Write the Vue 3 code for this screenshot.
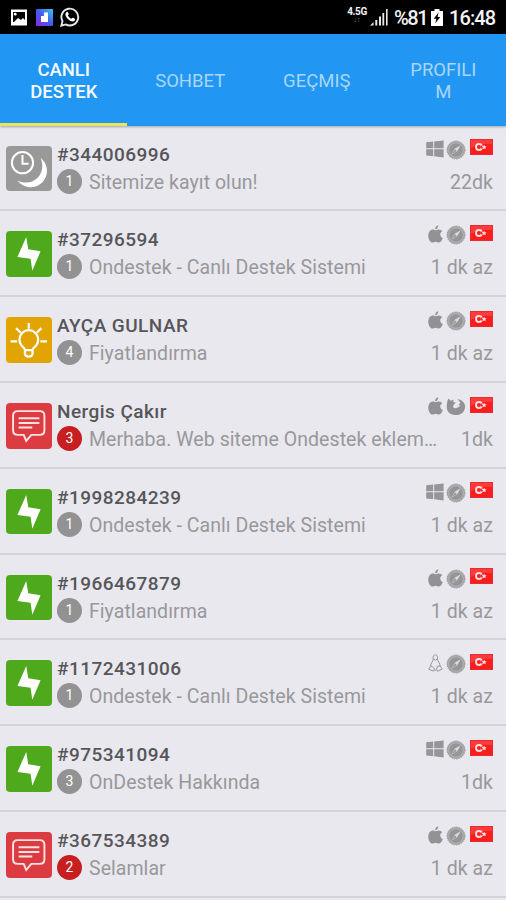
<script setup>
const tabs = [
  { lines: ['CANLI', 'DESTEK'], active: true },
  { lines: ['SOHBET'] },
  { lines: ['GEÇMIŞ'] },
  { lines: ['PROFILI', 'M'] },
]

const chats = [
  { kind: 'away', name: '#344006996', count: 1, message: 'Sitemize kayıt olun!', os: 'windows', browser: 'safari', time: '22dk' },
  { kind: 'online', name: '#37296594', count: 1, message: 'Ondestek - Canlı Destek Sistemi', os: 'apple', browser: 'safari', time: '1 dk az' },
  { kind: 'idea', name: 'AYÇA GULNAR', count: 4, message: 'Fiyatlandırma', os: 'apple', browser: 'safari', time: '1 dk az' },
  { kind: 'talk', name: 'Nergis Çakır', count: 3, message: 'Merhaba. Web siteme Ondestek eklem…', os: 'apple', browser: 'firefox', time: '1dk', unread: true },
  { kind: 'online', name: '#1998284239', count: 1, message: 'Ondestek - Canlı Destek Sistemi', os: 'windows', browser: 'safari', time: '1 dk az' },
  { kind: 'online', name: '#1966467879', count: 1, message: 'Fiyatlandırma', os: 'apple', browser: 'safari', time: '1 dk az' },
  { kind: 'online', name: '#1172431006', count: 1, message: 'Ondestek - Canlı Destek Sistemi', os: 'linux', browser: 'safari', time: '1 dk az' },
  { kind: 'online', name: '#975341094', count: 3, message: 'OnDestek Hakkında', os: 'windows', browser: 'safari', time: '1dk' },
  { kind: 'talk', name: '#367534389', count: 2, message: 'Selamlar', os: 'apple', browser: 'safari', time: '1 dk az', unread: true },
]
</script>

<template>
  <main class="screen">
    <header class="status">
      <div class="notices">
        <svg width="18" height="17" viewBox="0 0 18 17">
          <path d="M1 .5h16v16H1z" fill="#fff" />
          <path d="M3 3h12v8l-2-2-2 2-3-2-4 4H3z" fill="#000" />
          <circle cx="5.2" cy="5.2" r="1.4" fill="#fff" />
        </svg>
        <svg class="app-mark" width="17" height="17" viewBox="0 0 17 17">
          <defs>
            <linearGradient id="mark" x1="0" y1="1" x2="1" y2="0">
              <stop offset="0" stop-color="#8f25ea" />
              <stop offset=".5" stop-color="#425bea" />
              <stop offset="1" stop-color="#39c5f5" />
            </linearGradient>
          </defs>
          <rect width="17" height="17" rx="1" fill="url(#mark)" />
          <path d="M5 7h3V3.500h4V13H5z" fill="#fff" />
        </svg>
        <svg width="20" height="20" viewBox="0 0 20 20">
          <path d="M1.3 18.7l1.2-4.5a8.4 8.4 0 1 1 3.2 3.2z" fill="none" stroke="#e8e8e8" stroke-width="1.9" />
          <path d="M6.4 5.2c.8-.7 1.4-.5 1.7.2l.7 1.7c.1.5-.5 1-.9 1.4.8 1.6 2 2.6 3.6 3.3.6-.6 1-1.3 1.5-1l1.8.9c.7.4.2 1.7-.5 2.2-1.4 1-3.5.4-5.5-1.1-2.5-2-4.7-5.5-2.4-7.6z" fill="#fff" />
        </svg>
      </div>
      <div class="device">
        <div class="network"><b>4.5G</b><small>↓↑</small></div>
        <svg class="signal" width="18" height="18" viewBox="0 0 18 18" fill="#e8e8e8">
          <path d="M0 17.500L3.500 14v3.500zM5.300 12h2v5.500h-2zM9 8.500h2v9H9zM12.400 5h1.800v12.500h-1.800zM16 1h1.600v16.500H16z" />
        </svg>
        <span class="percent">%81</span>
        <svg class="battery" width="12" height="17" viewBox="0 0 12 17">
          <path d="M3.5 0h5v2H12v15H0V2h3.5z" fill="#fff" />
          <path d="M7.5 3.5L2.7 9.8h2.6l-1 4.5 5-6.3H6.6z" fill="#000" />
        </svg>
        <span class="clock">16:48</span>
      </div>
    </header>

    <nav class="tabs">
      <a v-for="tab in tabs" :key="tab.lines[0]" class="tab" :class="{ active: tab.active }">
        <span v-for="line in tab.lines" :key="line">{{ line }}</span>
      </a>
    </nav>

    <section class="list">
      <article v-for="chat in chats" :key="chat.name" class="row">
        <div class="avatar" :class="chat.kind">
          <svg v-if="chat.kind === 'away'" viewBox="0 0 45 45">
            <path d="M34.2 11.5c8 6.5 8.5 18 1.1 25-7.2 6.500-18.200 5.300-24-2.500 7 3.300 14.500 2.500 19.500-2.200 5.400-5.200 6.500-13 3.400-20.300z" fill="#fff" />
            <circle cx="16.300" cy="16.500" r="10.500" fill="#999" stroke="#fff" stroke-width="2" />
            <path d="M16.300 9v8.500h6" fill="none" stroke="#fff" stroke-width="2" />
          </svg>
          <svg v-else-if="chat.kind === 'online'" viewBox="0 0 45 45">
            <path d="M20 6L11.300 25.700l13 1.800L26 39.300l8.200-19.300-12.200-2z" fill="#fff" />
          </svg>
          <svg v-else-if="chat.kind === 'idea'" viewBox="0 0 45 45" fill="none" stroke="#fff" stroke-width="2.200">
            <path d="M18.500 32.500c0-2-1.600-3-3.100-4.200a9.300 9.300 0 1 1 14.300 0c-1.500 1.200-3.100 2.200-3.100 4.200M18 32.700h9M18.700 33v3.200q0 3 3.800 3t3.800-3V33" />
            <path d="M22.500 6v5.500M10 11l4.500 4.500M35 11l-4.500 4.500M4.500 24H11M34 24h6.500" />
          </svg>
          <svg v-else viewBox="0 0 45 45" fill="none" stroke="#fff" stroke-opacity=".85" stroke-width="1.900">
            <path d="M11.500 8h22q4.500 0 4.500 4.500V27q0 4.500-4.500 4.500H25L20 37.500 17.500 31.500h-6Q7 31.500 7 27V12.500Q7 8 11.500 8z" />
            <path d="M12.500 15h20.500M12.500 19.700h20.500M12.500 24.200h13.500" />
          </svg>
        </div>

        <div class="body">
          <div class="line">
            <strong class="name">{{ chat.name }}</strong>
            <div class="client">
              <svg v-if="chat.os === 'windows'" width="18" height="18" viewBox="0 0 18 18" fill="#969698">
                <path d="M.2 2.200l7-.6v6.700h-7zM8.200 1.400L17.600.5v7.800H8.200zM.2 9.300h7v6.900l-7-.6zM8.200 9.300h9.400v8.200l-9.400-1.200z" />
              </svg>
              <svg v-else-if="chat.os === 'apple'" class="apple" width="15" height="18" viewBox="0 0 15 18" fill="#929294">
                <path d="M10.200.3c.2 2-1.200 3.900-3.100 4C6.900 2.400 8.500.6 10.200.3zM7.400 5.200c.9 0 1.900-.9 3.500-.8 1.400.1 2.600.7 3.300 1.800-3 1.900-2.400 5.600.6 6.800-.9 2.300-2.300 4.600-4 4.600-1.300 0-1.700-.8-3.200-.8s-2 .8-3.200.8C2 17.600-.1 13.300.3 9.900c.3-3.100 2.100-5.300 4.300-5.400 1.200-.1 2 .7 2.800.7z" />
              </svg>
              <svg v-else class="apple" width="15" height="18" viewBox="0 0 15 18" fill="none" stroke="#98989a">
                <path d="M5.200 5c-.4-2.700.6-4.300 2.200-4.300S9.700 2.400 9.500 5c.1 2.200 2.500 4 2.700 7.400M5.200 5c-.1 2.300-2.800 4.800-2.600 7.400M5.500 5l2 1.200L9.400 5M2.500 12L.7 15.200l4.800 2 1-2.200L4 12.200zM12.200 12l2 3-4.600 2.300-1-2.300.8-2.800zM6.500 16.200h2" />
              </svg>
              <svg v-if="chat.browser === 'safari'" width="20" height="20" viewBox="0 0 20 20">
                <circle cx="10" cy="10" r="9" fill="#a0a0a3" stroke="#a0a0a3" stroke-width="1" stroke-dasharray="1.500 1" />
                <circle cx="10" cy="10" r="7.300" fill="#969698" stroke="#bdbdc0" stroke-width=".8" />
                <path d="M14.600 5.200L11.200 11.200 5.400 14.800 8.800 8.800z" fill="#dcdce0" />
                <path d="M9 9.300l1.700 1.700-4.800 3.300z" fill="#969698" />
              </svg>
              <svg v-else width="20" height="20" viewBox="0 0 20 20">
                <path d="M2.300 1.500l2.500 2.200 3-1.200-.6 2.200 2.500 1.100-2 1.900-.8 2.300c1.500 1.700 3.300 1.500 4.800.5l2.800-1.800-1.800-.6 1.600-2.600-2.800-3.500c5.200 1 8.200 4.500 7.500 8.900-1 4.800-5.300 7.600-9.800 7C3.800 17.800.9 14.500.8 10.500.7 7 1.200 4 2.300 1.500z" fill="#929294" />
              </svg>
              <svg class="flag" width="23" height="16" viewBox="0 0 23 16">
                <rect x=".5" y=".5" width="22" height="15" fill="#fa1d1d" stroke="#ea2930" />
                <path d="M1 1h21v4Q10 4 1 9z" fill="#ff5454" opacity=".55" />
                <circle cx="9" cy="8" r="3" fill="none" stroke="#ffdede" stroke-width="1.900" />
                <path d="M11 6.500h3v3h-3z" fill="#fb2929" />
                <path d="M14.200 5.700l.7 1.500 1.800.1-1.300 1.100.3 1.800-1.500-.8-1.600.7.300-1.700-1.200-1.100 1.700-.2z" fill="#ffdede" />
              </svg>
            </div>
          </div>
          <div class="line second">
            <span class="count" :class="{ unread: chat.unread }">{{ chat.count }}</span>
            <span class="message">{{ chat.message }}</span>
            <time class="time">{{ chat.time }}</time>
          </div>
        </div>
      </article>
    </section>
  </main>
</template>

<style>
body {
  background: #e9e8ee;
}
</style>

<style scoped>
.screen {
  width: 506px;
  height: 900px;
  overflow: hidden;
  background: #e9e8ee;
  font-family: Roboto, "Liberation Sans", sans-serif;
}

.screen * {
  box-sizing: border-box;
}

svg {
  display: block;
  flex: none;
}

.status {
  height: 34px;
  display: flex;
  justify-content: space-between;
  padding: 0 11px 0 10px;
  background: #000;
  color: #f4f4f4;
}

.notices,
.device {
  display: flex;
  align-items: center;
}

.notices {
  gap: 7px;
}

.app-mark {
  margin-left: 1px;
}

.network {
  width: 20px;
  height: 20px;
  margin-right: 3px;
  display: flex;
  flex-direction: column;
  align-items: center;
  line-height: 10px;
}

.network b {
  font-size: 10px;
  letter-spacing: -0.4px;
}

.network small {
  font-size: 7px;
  line-height: 7px;
  color: #888;
}

.percent,
.clock {
  font-size: 20px;
  line-height: 34px;
  font-weight: 500;
  padding-top: 1px;
}

.percent {
  width: 33px;
  margin-left: 6px;
  letter-spacing: -1.4px;
}

.battery {
  margin-left: 4px;
}

.clock {
  width: 46px;
  margin-left: 6px;
  letter-spacing: -0.9px;
}

.tabs {
  position: relative;
  height: 91.700px;
  display: grid;
  grid-template-columns: repeat(4, 1fr);
  background: #2196f3;
  box-shadow: 0 1px 2px rgba(60, 60, 70, 0.4);
}

.tab {
  display: flex;
  flex-direction: column;
  align-items: center;
  justify-content: center;
  padding-top: 7px;
  padding-left: 1px;
  border-bottom: 3px solid transparent;
  color: #a9d6fa;
  font-size: 18.500px;
  line-height: 21.500px;
}

.tab.active {
  color: #f3faff;
  border-bottom-color: #e8e557;
  font-weight: 500;
}

.row {
  height: 85.800px;
  display: flex;
  gap: 5.500px;
  padding: 17px 13px 0 6px;
  border-bottom: 2px solid #d4d3d8;
}

.avatar {
  width: 45.500px;
  height: 45.500px;
  flex: none;
  margin-top: 3px;
  border-radius: 4px;
}

.avatar.away {
  background: #999;
}

.avatar.online {
  background: #4fa91c;
}

.avatar.idea {
  background: #e2a400;
}

.avatar.talk {
  background: #dc3c41;
}

.body {
  flex: 1;
  min-width: 0;
}

.line {
  display: flex;
  justify-content: space-between;
}

.name {
  height: 26px;
  line-height: 23px;
  font-size: 19px;
  font-weight: 500;
  letter-spacing: 0.450px;
  color: #56565a;
}

.client {
  display: flex;
  gap: 2px;
}

.client > svg {
  margin-top: -3px;
}

.client > .apple {
  margin-right: 1px;
}

.client > .flag {
  margin-top: -3.500px;
  margin-left: 2px;
}

.second {
  height: 26px;
  align-items: center;
}

.count {
  width: 25px;
  height: 25px;
  flex: none;
  margin-top: -1px;
  border-radius: 50%;
  background: #929292;
  color: #fff;
  font-size: 14px;
  line-height: 25px;
  text-align: center;
}

.count.unread {
  background: #c71e20;
}

.message,
.time {
  padding-top: 2px;
  font-size: 19.500px;
  line-height: 26px;
  letter-spacing: 0.050px;
  color: #98989b;
  white-space: nowrap;
}

.message {
  flex: 1;
  margin-left: 7px;
}
</style>
